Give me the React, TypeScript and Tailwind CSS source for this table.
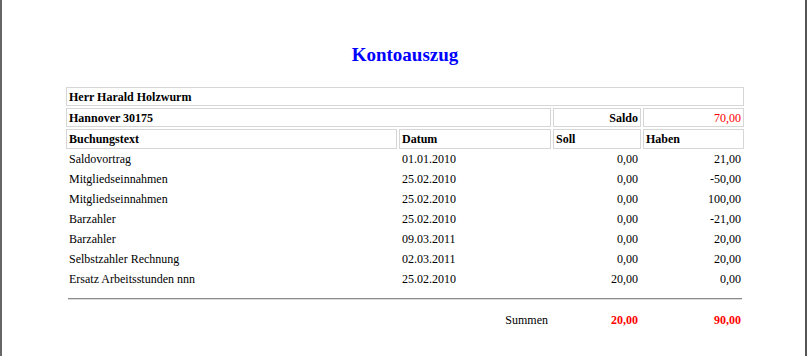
import React from "react";

const rows: [string, string, string, string][] = [
  ["Saldovortrag", "01.01.2010", "0,00", "21,00"],
  ["Mitgliedseinnahmen", "25.02.2010", "0,00", "-50,00"],
  ["Mitgliedseinnahmen", "25.02.2010", "0,00", "100,00"],
  ["Barzahler", "25.02.2010", "0,00", "-21,00"],
  ["Barzahler", "09.03.2011", "0,00", "20,00"],
  ["Selbstzahler Rechnung", "02.03.2011", "0,00", "20,00"],
  ["Ersatz Arbeitsstunden nnn", "25.02.2010", "20,00", "0,00"],
];

const cell = "h-[19px] border border-[#d6d6d6] px-[2px] flex items-center font-bold";

export default function App() {
  return (
    <div
      className="w-[808px] h-[356px] bg-white flex text-[12px] text-black"
      style={{ fontFamily: '"Liberation Serif", "Times New Roman", serif' }}
    >
      <div className="w-[2px] h-full bg-[#666]" />
      <div className="w-[803px] h-full flex flex-col pt-[43px] pl-[64px]">
        <div className="w-[678px] text-center text-[19px] leading-[23px] font-bold text-[#0000ff]">
          Kontoauszug
        </div>
        <div className="mt-[21px] w-[678px] grid grid-cols-[331px_152px_88px_101px] gap-x-[2px] gap-y-[2px]">
          <div className={`${cell} col-span-4`}>Herr Harald Holzwurm</div>
          <div className={`${cell} col-span-2`}>Hannover 30175</div>
          <div className={`${cell} justify-end`}>Saldo</div>
          <div className={`${cell} justify-end font-normal text-[#ff0000]`}>70,00</div>
          <div className={`${cell} h-[20px]`}>Buchungstext</div>
          <div className={`${cell} h-[20px]`}>Datum</div>
          <div className={`${cell} h-[20px]`}>Soll</div>
          <div className={`${cell} h-[20px]`}>Haben</div>
        </div>
        <div className="w-[678px] grid grid-cols-[331px_152px_88px_101px] gap-x-[2px]">
          {rows.map((r, i) => (
            <React.Fragment key={i}>
              <div className="h-[20px] flex items-center px-[3px]">{r[0]}</div>
              <div className="h-[20px] flex items-center px-[3px]">{r[1]}</div>
              <div className="h-[20px] flex items-center justify-end px-[3px]">{r[2]}</div>
              <div className="h-[20px] flex items-center justify-end px-[3px]">{r[3]}</div>
            </React.Fragment>
          ))}
        </div>
        <div className="mt-[9px] ml-[2px] w-[674px] border-t border-t-[#8a8a8a] border-b border-b-[#dcdcdc]" />
        <div className="mt-[10px] w-[678px] grid grid-cols-[331px_152px_88px_101px] gap-x-[2px]">
          <div className="h-[20px]" />
          <div className="h-[20px] flex items-center justify-end px-[3px]">Summen</div>
          <div className="h-[20px] flex items-center justify-end px-[3px] font-bold text-[#ff0000]">20,00</div>
          <div className="h-[20px] flex items-center justify-end px-[3px] font-bold text-[#ff0000]">90,00</div>
        </div>
      </div>
      <div className="w-[2px] h-full bg-[#555]" />
      <div className="w-[1px] h-full bg-white" />
    </div>
  );
}
